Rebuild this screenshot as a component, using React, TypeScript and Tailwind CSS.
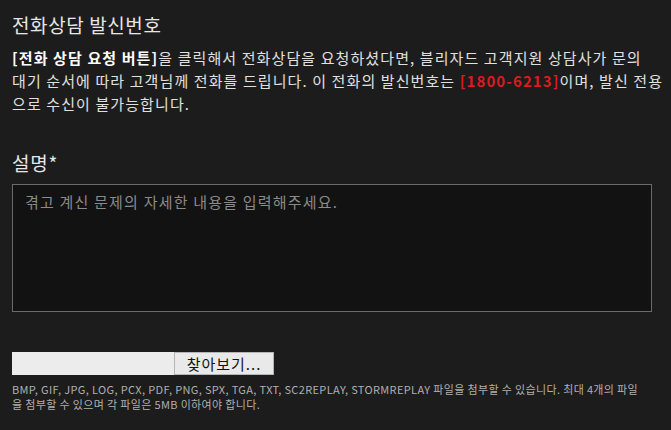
import React from 'react';

const font = { fontFamily: '"Noto Sans CJK KR", "Noto Sans", sans-serif' };

export default function App() {
  return (
    <div className="min-h-[430px] w-[671px] bg-[#1c1c1c] px-3 pt-[12px] text-[#e8e8e8]" style={font}>
      <h2 className="text-[19px] leading-[26px] tracking-[0.6px] text-[#e6e6e6]">전화상담 발신번호</h2>
      <p className="mt-[8px] whitespace-nowrap text-[15px] leading-[23px] tracking-[1.1px] text-[#e0e0e0]">
        <b className="font-bold text-white">[전화 상담 요청 버튼]</b>을 클릭해서 전화상담을 요청하셨다면, 블리자드 고객지원 상담사가 문의
        <br />
        대기 순서에 따라 고객님께 전화를 드립니다. 이 전화의 발신번호는{' '}
        <b className="font-bold text-[#dc1a1f]">[1800-6213]</b>이며, 발신 전용
        <br />
        으로 수신이 불가능합니다.
      </p>

      <label className="mt-[35px] block text-[19px] leading-[26px] tracking-[0.8px] text-[#e6e6e6]">설명*</label>
      <textarea
        className="mt-[8px] block h-[128px] w-[640px] resize-none border border-[#6a6a6a] bg-[#121212] px-3 py-[6px] text-[15px] tracking-[1.2px] text-[#ddd] placeholder:text-[#8a8a8a] outline-none"
        placeholder="겪고 계신 문제의 자세한 내용을 입력해주세요."
        style={font}
      />

      <div className="mt-10 flex h-[23px]">
        <div className="w-[162px] bg-[#ececec]" />
        <button className="w-[100px] border border-[#b5b5b5] bg-[#e9e9e9] text-[15px] leading-[21px] tracking-[1px] text-[#111]" style={font}>
          찾아보기...
        </button>
      </div>
      <p className="mt-[7px] whitespace-nowrap text-[11px] leading-[15px] tracking-[0.35px] text-[#b0b0b0]">
        BMP, GIF, JPG, LOG, PCX, PDF, PNG, SPX, TGA, TXT, SC2REPLAY, STORMREPLAY 파일을 첨부할 수 있습니다. 최대 4개의 파일
        <br />
        을 첨부할 수 있으며 각 파일은 5MB 이하여야 합니다.
      </p>
    </div>
  );
}
